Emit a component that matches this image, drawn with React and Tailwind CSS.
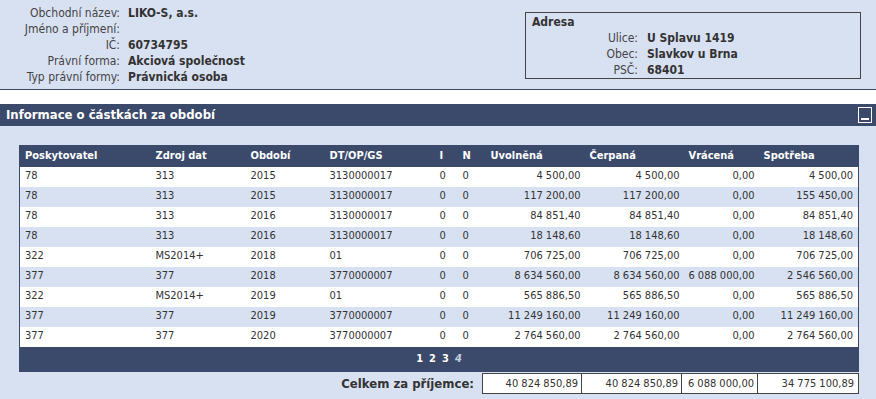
import React from 'react';

const rows = [
  ['78', '313', '2015', '3130000017', '0', '0', '4 500,00', '4 500,00', '0,00', '4 500,00'],
  ['78', '313', '2015', '3130000017', '0', '0', '117 200,00', '117 200,00', '0,00', '155 450,00'],
  ['78', '313', '2016', '3130000017', '0', '0', '84 851,40', '84 851,40', '0,00', '84 851,40'],
  ['78', '313', '2016', '3130000017', '0', '0', '18 148,60', '18 148,60', '0,00', '18 148,60'],
  ['322', 'MS2014+', '2018', '01', '0', '0', '706 725,00', '706 725,00', '0,00', '706 725,00'],
  ['377', '377', '2018', '3770000007', '0', '0', '8 634 560,00', '8 634 560,00', '6 088 000,00', '2 546 560,00'],
  ['322', 'MS2014+', '2019', '01', '0', '0', '565 886,50', '565 886,50', '0,00', '565 886,50'],
  ['377', '377', '2019', '3770000007', '0', '0', '11 249 160,00', '11 249 160,00', '0,00', '11 249 160,00'],
  ['377', '377', '2020', '3770000007', '0', '0', '2 764 560,00', '2 764 560,00', '0,00', '2 764 560,00'],
];

const headers = ['Poskytovatel', 'Zdroj dat', 'Období', 'DT/OP/GS', 'I', 'N', 'Uvolněná', 'Čerpaná', 'Vrácená', 'Spotřeba'];
const widths = [131, 95, 79, 110, 23, 28, 99, 99, 75, 100];
const numPad = ['', '', '', '', '', '', 'pr-[4px]', 'pr-[4px]', 'pr-[4px]', 'pr-[5px]'];

const info = [
  ['Obchodní název:', 'LIKO-S, a.s.'],
  ['Jméno a příjmení:', ''],
  ['IČ:', '60734795'],
  ['Právní forma:', 'Akciová společnost'],
  ['Typ právní formy:', 'Právnická osoba'],
];

const address = [
  ['Ulice:', 'U Splavu 1419'],
  ['Obec:', 'Slavkov u Brna'],
  ['PSČ:', '68401'],
];

export default function App() {
  return (
    <div
      className="w-[876px] h-[399px] overflow-hidden bg-[#d8e1f2] text-[#333] whitespace-nowrap"
      style={{ fontFamily: '"DejaVu Sans Condensed", "DejaVu Sans", Verdana, sans-serif', fontStretch: 'condensed' }}
    >
      {/* subject header */}
      <div className="flex h-[90px] items-start border-b border-[#3b4a6b]">
        <div className="w-[525px] shrink-0 pt-[5px] text-[12px] leading-[16px]">
          {info.map(([k, v]) => (
            <div key={k} className="flex">
              <span className="w-[120px] shrink-0 text-right text-[#444]">{k}</span>
              <span className="pl-[8px] font-bold">{v}</span>
            </div>
          ))}
        </div>
        <div className="mt-[12px] w-[336px] shrink-0 border border-[#444] text-[12px] leading-[16px]">
          <div className="pl-[6px] pt-[1px] font-bold">Adresa</div>
          {address.map(([k, v]) => (
            <div key={k} className="flex">
              <span className="w-[112px] shrink-0 text-right text-[#444]">{k}</span>
              <span className="pl-[9px] font-bold">{v}</span>
            </div>
          ))}
        </div>
      </div>

      <div className="h-[14px] bg-white" />

      {/* section title */}
      <div className="flex h-[22px] items-center justify-between bg-[#3b4a6b] pl-[6px] pr-[4px] text-white">
        <span className="text-[13px] font-bold">Informace o částkách za období</span>
        <span className="flex h-[16px] w-[14px] items-end justify-center border border-white pb-[2px]">
          <span className="h-[2px] w-[8px] bg-white" />
        </span>
      </div>

      {/* table */}
      <div className="pl-[19px] pt-[19px]">
        <table className="w-[839px] table-fixed border-collapse border border-[#3b4a6b] text-[11px]">
          <colgroup>
            {widths.map((w, i) => (
              <col key={i} style={{ width: w }} />
            ))}
          </colgroup>
          <thead>
            <tr className="h-[21px] bg-[#3b4a6b] text-white">
              {headers.map((h) => (
                <th key={h} className="pl-[5px] text-left font-bold">{h}</th>
              ))}
            </tr>
          </thead>
          <tbody>
            {rows.map((r, i) => (
              <tr key={i} className={`h-[20px] ${i % 2 ? 'bg-[#d8e1f2]' : 'bg-white'}`}>
                {r.map((c, j) => (
                  <td key={j} className={j >= 6 ? `text-right ${numPad[j]}` : 'pl-[5px]'}>{c}</td>
                ))}
              </tr>
            ))}
            <tr className="h-[25px] bg-[#3b4a6b]">
              <td colSpan={10} className="text-[11px] font-bold text-white">
                <div className="flex justify-center gap-[6px]">
                  <span>1</span>
                  <span>2</span>
                  <span>3</span>
                  <span className="italic text-[#c4cde0]">4</span>
                </div>
              </td>
            </tr>
          </tbody>
        </table>

        {/* totals */}
        <div className="mt-[1px] flex h-[21px] items-center">
          <span className="w-[463px] shrink-0 pr-[8px] text-right text-[13px] font-bold">Celkem za příjemce:</span>
          <div className="flex h-[21px] shrink-0 border border-[#444] bg-white text-[11px]">
            <span className="w-[99px] border-r border-[#444] pr-[3px] text-right leading-[19px]">40 824 850,89</span>
            <span className="w-[100px] border-r border-[#444] pr-[3px] text-right leading-[19px]">40 824 850,89</span>
            <span className="w-[76px] border-r border-[#444] pr-[3px] text-right leading-[19px]">6 088 000,00</span>
            <span className="w-[100px] pr-[4px] text-right leading-[19px]">34 775 100,89</span>
          </div>
        </div>
      </div>
    </div>
  );
}
